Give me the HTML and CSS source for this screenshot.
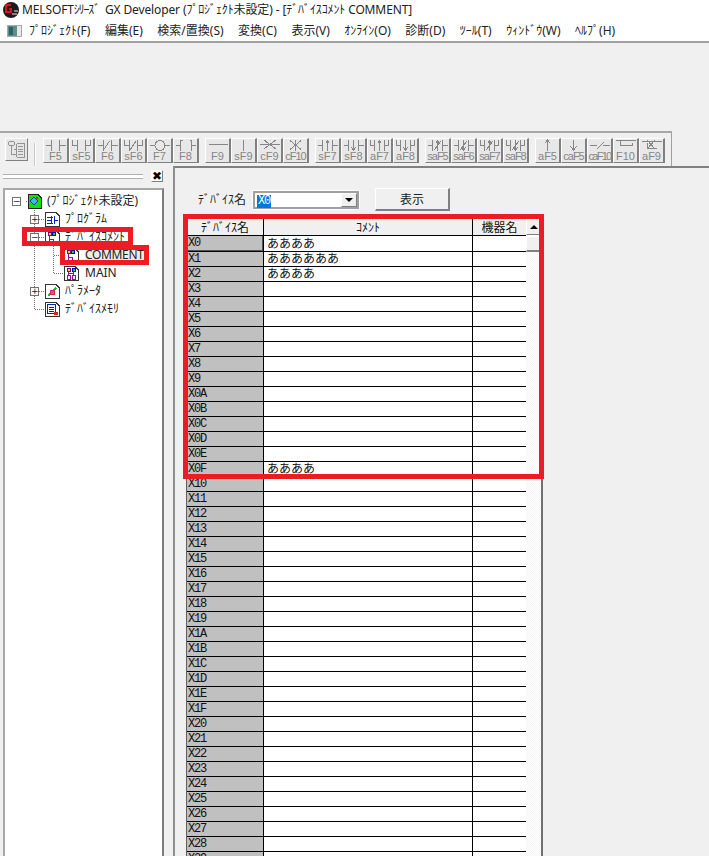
FILE: index.html
```html
<!DOCTYPE html>
<html lang="ja">
<head>
<meta charset="utf-8">
<title>GX Developer</title>
<link rel="stylesheet" href="styles.css">
</head>
<body>
<svg class="defs" width="0" height="0">
  <defs>
    <symbol id="l-no" viewBox="0 0 24 12"><path d="M2 6.5H7.5M7.5 1V12M15.5 1V12M15.5 6.5H22"/></symbol>
    <symbol id="l-nop" viewBox="0 0 24 12"><path d="M2.5 1V6.5H7.5M7.5 1V12M15.5 1V12M15.5 6.5H20.5V1"/></symbol>
    <symbol id="l-nc" viewBox="0 0 24 12"><path d="M2 6.5H7.5M7.5 1V12M15.5 1V12M15.5 6.5H22M7.5 11L13.5 2"/></symbol>
    <symbol id="l-ncp" viewBox="0 0 24 12"><path d="M2.5 1V6.5H7.5M7.5 1V12M15.5 1V12M15.5 6.5H20.5V1M8 11L14 2"/></symbol>
    <symbol id="l-coil" viewBox="0 0 24 12"><circle cx="12" cy="6.5" r="5"/><path d="M2 6.5H7M17 6.5H22"/></symbol>
    <symbol id="l-app" viewBox="0 0 24 12"><path d="M2 6.5H5.5M8.5 1H6.5V12H8.5M15.5 1H17.5V12H15.5M18 6.5H22"/></symbol>
    <symbol id="l-h" viewBox="0 0 24 12"><path d="M3 5.5H22"/></symbol>
    <symbol id="l-v" viewBox="0 0 24 12"><path d="M11.5 1V12"/></symbol>
    <symbol id="l-xh" viewBox="0 0 24 12"><path d="M2 5.5H22M6 1L18 10M18 1L6 10"/></symbol>
    <symbol id="l-xv" viewBox="0 0 24 12"><path d="M11.5 1V12M6 1.5L17 10.5M17 1.5L6 10.5"/></symbol>
    <symbol id="l-up" viewBox="0 0 24 12"><path d="M2 6.5H6.5M6.5 1V12M16.5 1V12M16.5 6.5H22M11.5 2V12M9.5 4.5L11.5 2L13.5 4.5"/></symbol>
    <symbol id="l-dn" viewBox="0 0 24 12"><path d="M2 6.5H6.5M6.5 1V12M16.5 1V12M16.5 6.5H22M11.5 1V11M9.5 8.5L11.5 11L13.5 8.5"/></symbol>
    <symbol id="l-upp" viewBox="0 0 24 12"><path d="M2.5 1V6.5H6.5M6.5 1V12M16.5 1V12M16.5 6.5H20.5V1M11.5 2V12M9.5 4.5L11.5 2L13.5 4.5"/></symbol>
    <symbol id="l-dnp" viewBox="0 0 24 12"><path d="M2.5 1V6.5H6.5M6.5 1V12M16.5 1V12M16.5 6.5H20.5V1M11.5 1V11M9.5 8.5L11.5 11L13.5 8.5"/></symbol>
    <symbol id="l-upn" viewBox="0 0 24 12"><path d="M2 6.5H6.5M6.5 1V12M16.5 1V12M16.5 6.5H22M11.5 2V12M9.5 4.5L11.5 2L13.5 4.5M8 11L15 2"/></symbol>
    <symbol id="l-dnn" viewBox="0 0 24 12"><path d="M2 6.5H6.5M6.5 1V12M16.5 1V12M16.5 6.5H22M11.5 1V11M9.5 8.5L11.5 11L13.5 8.5M8 11L15 2"/></symbol>
    <symbol id="l-upnp" viewBox="0 0 24 12"><path d="M2.5 1V6.5H6.5M6.5 1V12M16.5 1V12M16.5 6.5H20.5V1M11.5 2V12M9.5 4.5L11.5 2L13.5 4.5M8 11L15 2"/></symbol>
    <symbol id="l-dnnp" viewBox="0 0 24 12"><path d="M2.5 1V6.5H6.5M6.5 1V12M16.5 1V12M16.5 6.5H20.5V1M11.5 1V11M9.5 8.5L11.5 11L13.5 8.5M8 11L15 2"/></symbol>
    <symbol id="l-aup" viewBox="0 0 24 12"><path d="M11.5 1V12M8.5 4.5L11.5 1L14.5 4.5"/></symbol>
    <symbol id="l-adn" viewBox="0 0 24 12"><path d="M11.5 1V11M8.5 7.5L11.5 11L14.5 7.5"/></symbol>
    <symbol id="l-diag" viewBox="0 0 24 12"><path d="M2 6.5H9M15 6.5H22M9 10L16 3"/></symbol>
    <symbol id="l-f10" viewBox="0 0 24 12"><path d="M2 1.5H22M6.5 1.5V6.5H18M18 6.5V4"/></symbol>
    <symbol id="l-af9" viewBox="0 0 24 12"><path d="M2 2.5H22M7 9.5H17M7 1L15 10M15 1L7 10M7 9.5V4"/></symbol>
  </defs>
</svg>

<header class="titlebar">
  <svg class="logo" viewBox="0 0 16 16"><circle cx="8" cy="8" r="8" fill="#1c1c1c"/><path d="M8 3H3V10H8V7H6" fill="none" stroke="#e01020" stroke-width="2"/><path d="M9 12H14M11 9H15" stroke="#e8e8e8"/></svg>
  <span class="title-text">MELSOFT<span class="kana-tight">ｼﾘｰｽﾞ</span>&nbsp; GX Developer (ﾌﾟﾛｼﾞｪｸﾄ未設定) - [ﾃﾞﾊﾞｲｽｺﾒﾝﾄ COMMENT]</span>
</header>

<nav class="menubar">
  <svg class="menu-icon" viewBox="0 0 15 12"><rect width="15" height="12" fill="#a8a8a8"/><rect x="1" y="1" width="13" height="10" fill="#e8e8e8"/><rect x="1" y="1" width="9" height="10" fill="#5d8f86"/><rect x="2" y="2" width="4" height="8" fill="#2f5f6a"/></svg>
  <ul class="menu-list">
    <li>ﾌﾟﾛｼﾞｪｸﾄ(F)</li><li>編集(E)</li><li>検索/置換(S)</li><li>変換(C)</li><li>表示(V)</li><li>ｵﾝﾗｲﾝ(O)</li><li>診断(D)</li><li>ﾂｰﾙ(T)</li><li>ｳｨﾝﾄﾞｳ(W)</li><li>ﾍﾙﾌﾟ(H)</li>
  </ul>
</nav>

<div class="blank"></div>

<div class="toolbar">
  <div class="tb-first">
    <button class="tb-big"><svg viewBox="0 0 21 20" class="tb-big-icon"><path d="M2 1.5H8V5.5H2ZM4.5 5.5V15.5H10M8 9.5H10M10.5 3.5H19.5V18.5H10.5ZM12 6.5H18M12 9.5H18M12 12.5H18M12 15.5H18"/></svg></button>
  </div>
  <div class="tb-sep"></div>
  <div class="tb-group">
    <button class="tb"><svg><use href="#l-no"/></svg><span>F5</span></button>
    <button class="tb"><svg><use href="#l-nop"/></svg><span>sF5</span></button>
    <button class="tb"><svg><use href="#l-nc"/></svg><span>F6</span></button>
    <button class="tb"><svg><use href="#l-ncp"/></svg><span>sF6</span></button>
    <button class="tb"><svg><use href="#l-coil"/></svg><span>F7</span></button>
    <button class="tb"><svg><use href="#l-app"/></svg><span>F8</span></button>
  </div>
  <div class="tb-group">
    <button class="tb"><svg><use href="#l-h"/></svg><span>F9</span></button>
    <button class="tb"><svg><use href="#l-v"/></svg><span>sF9</span></button>
    <button class="tb"><svg><use href="#l-xh"/></svg><span>cF9</span></button>
    <button class="tb"><svg><use href="#l-xv"/></svg><span class="tight">cF10</span></button>
  </div>
  <div class="tb-group">
    <button class="tb"><svg><use href="#l-up"/></svg><span>sF7</span></button>
    <button class="tb"><svg><use href="#l-dn"/></svg><span>sF8</span></button>
    <button class="tb"><svg><use href="#l-upp"/></svg><span>aF7</span></button>
    <button class="tb"><svg><use href="#l-dnp"/></svg><span>aF8</span></button>
  </div>
  <div class="tb-group">
    <button class="tb"><svg><use href="#l-upn"/></svg><span class="tight">saF5</span></button>
    <button class="tb"><svg><use href="#l-dnn"/></svg><span class="tight">saF6</span></button>
    <button class="tb"><svg><use href="#l-upnp"/></svg><span class="tight">saF7</span></button>
    <button class="tb"><svg><use href="#l-dnnp"/></svg><span class="tight">saF8</span></button>
  </div>
  <div class="tb-group">
    <button class="tb"><svg><use href="#l-aup"/></svg><span>aF5</span></button>
    <button class="tb"><svg><use href="#l-adn"/></svg><span class="tight">caF5</span></button>
    <button class="tb"><svg><use href="#l-diag"/></svg><span class="tighter">caF10</span></button>
    <button class="tb"><svg><use href="#l-f10"/></svg><span>F10</span></button>
    <button class="tb"><svg><use href="#l-af9"/></svg><span>aF9</span></button>
  </div>
</div>

<main class="workspace">
  <aside class="leftpane">
    <div class="pane-head">
      <div class="grip"></div>
      <button class="close">✖</button>
    </div>
    <div class="tree">
      <svg class="tree-lines" width="80" height="130"><path d="M20.5 11H27M29.5 20V119M29.5 29H40M29.5 47H40M29.5 101H40M29.5 119H40M48.5 56V83M48.5 65H59M48.5 83H59"/></svg>
      <div class="node lv0"><span class="exp">−</span>
        <svg class="ticon" viewBox="0 0 15 15"><path d="M1 .5H11L14.500 4V14.500H1Z" fill="#10e010" stroke="#222"/><path d="M7 3L11 7L7 11L3 7Z" fill="#30c0e0" stroke="#0030d0"/><circle cx="10" cy="4" r="1.500" fill="#e02020"/></svg>
        <span class="lbl">(ﾌﾟﾛｼﾞｪｸﾄ未設定)</span></div>
      <div class="node lv1"><span class="exp">+</span>
        <svg class="ticon" viewBox="0 0 15 15"><path d="M.5 .5H11L14.500 4V14.500H.5Z" fill="#fff" stroke="#333"/><path d="M2 5H6M2 8H6M2 11H6M6 4V12M9 4V12M9 8H13M7 5H8M7 11H8" stroke="#0020e0" fill="none"/></svg>
        <span class="lbl">ﾌﾟﾛｸﾞﾗﾑ</span></div>
      <div class="node lv1"><span class="exp">−</span>
        <svg class="ticon" viewBox="0 0 15 15"><path d="M.5 .5H11L14.500 4V14.500H.5Z" fill="#fff" stroke="#333"/><rect x="3" y="2" width="3" height="3" fill="#e0e000" stroke="#800080"/><rect x="7" y="2" width="3" height="3" fill="#20d020" stroke="#0000c0"/><path d="M4.500 5V13M4.500 9H8V12" stroke="#a000a0" fill="none"/></svg>
        <span class="lbl">ﾃﾞﾊﾞｲｽｺﾒﾝﾄ</span></div>
      <div class="node lv2">
        <svg class="ticon" viewBox="0 0 15 15"><path d="M.5 .5H11L14.500 4V14.500H.5Z" fill="#fff" stroke="#333"/><rect x="3" y="2" width="3" height="3" fill="#e0e000" stroke="#800080"/><rect x="7" y="2" width="3" height="3" fill="#20d020" stroke="#0000c0"/><path d="M4.500 5V13M4.500 9H8V12" stroke="#a000a0" fill="none"/></svg>
        <span class="lbl selected">COMMENT</span></div>
      <div class="node lv2">
        <svg class="ticon" viewBox="0 0 15 15"><path d="M.5 .5H11L14.500 4V14.500H.5Z" fill="#fff" stroke="#333"/><rect x="3" y="2" width="3" height="3" fill="#e0e000" stroke="#800080"/><rect x="8" y="2" width="3" height="3" fill="#20d020" stroke="#0000c0"/><rect x="3" y="9" width="3" height="4" fill="#fff" stroke="#a000a0"/><rect x="8" y="9" width="3" height="4" fill="#fff" stroke="#a000a0"/><path d="M4.500 5V9M9.500 5V9M4.500 7H9.500" stroke="#a000a0"/></svg>
        <span class="lbl main-lbl">MAIN</span></div>
      <div class="node lv1"><span class="exp">+</span>
        <svg class="ticon" viewBox="0 0 15 15"><path d="M.5 .5H11L14.500 4V14.500H.5Z" fill="#fff" stroke="#333"/><path d="M3 12L11 4" stroke="#10c020" stroke-width="2"/><rect x="5" y="6" width="4" height="4" fill="#a08030" stroke="#e02060"/></svg>
        <span class="lbl">ﾊﾟﾗﾒｰﾀ</span></div>
      <div class="node lv1b">
        <svg class="ticon" viewBox="0 0 15 15"><path d="M.5 .5H11L14.500 4V14.500H.5Z" fill="#fff" stroke="#333"/><path d="M2.500 2.500H10.500V11.500H2.500Z" fill="#fff" stroke="#0020d0"/><path d="M4 5H9M4 7H9M4 9H9" stroke="#222"/><rect x="9" y="10" width="4" height="3" fill="#e02020"/></svg>
        <span class="lbl">ﾃﾞﾊﾞｲｽﾒﾓﾘ</span></div>
    </div>
  </aside>

  <section class="rightpane">
    <div class="form-row">
      <label class="form-label">ﾃﾞﾊﾞｲｽ名</label>
      <div class="combo"><span class="combo-text"><span class="combo-sel">X0</span></span><span class="combo-btn"><i class="arrow-down"></i></span></div>
      <button class="show-btn">表示</button>
    </div>
    <div class="grid">
      <table class="sheet">
        <colgroup><col class="c1"><col class="c2"><col class="c3"></colgroup>
        <thead><tr><th>ﾃﾞﾊﾞｲｽ名</th><th>ｺﾒﾝﾄ</th><th>機器名</th></tr></thead>
        <tbody>
          <tr class="first"><td class="focus">X0</td><td>ああああ</td><td></td></tr>
          <tr><td>X1</td><td>ああああああ</td><td></td></tr>
          <tr><td>X2</td><td>ああああ</td><td></td></tr>
          <tr><td>X3</td><td></td><td></td></tr>
          <tr><td>X4</td><td></td><td></td></tr>
          <tr><td>X5</td><td></td><td></td></tr>
          <tr><td>X6</td><td></td><td></td></tr>
          <tr><td>X7</td><td></td><td></td></tr>
          <tr><td>X8</td><td></td><td></td></tr>
          <tr><td>X9</td><td></td><td></td></tr>
          <tr><td>X0A</td><td></td><td></td></tr>
          <tr><td>X0B</td><td></td><td></td></tr>
          <tr><td>X0C</td><td></td><td></td></tr>
          <tr><td>X0D</td><td></td><td></td></tr>
          <tr><td>X0E</td><td></td><td></td></tr>
          <tr><td>X0F</td><td>ああああ</td><td></td></tr>
          <tr><td>X10</td><td></td><td></td></tr>
          <tr><td>X11</td><td></td><td></td></tr>
          <tr><td>X12</td><td></td><td></td></tr>
          <tr><td>X13</td><td></td><td></td></tr>
          <tr><td>X14</td><td></td><td></td></tr>
          <tr><td>X15</td><td></td><td></td></tr>
          <tr><td>X16</td><td></td><td></td></tr>
          <tr><td>X17</td><td></td><td></td></tr>
          <tr><td>X18</td><td></td><td></td></tr>
          <tr><td>X19</td><td></td><td></td></tr>
          <tr><td>X1A</td><td></td><td></td></tr>
          <tr><td>X1B</td><td></td><td></td></tr>
          <tr><td>X1C</td><td></td><td></td></tr>
          <tr><td>X1D</td><td></td><td></td></tr>
          <tr><td>X1E</td><td></td><td></td></tr>
          <tr><td>X1F</td><td></td><td></td></tr>
          <tr><td>X20</td><td></td><td></td></tr>
          <tr><td>X21</td><td></td><td></td></tr>
          <tr><td>X22</td><td></td><td></td></tr>
          <tr><td>X23</td><td></td><td></td></tr>
          <tr><td>X24</td><td></td><td></td></tr>
          <tr><td>X25</td><td></td><td></td></tr>
          <tr><td>X26</td><td></td><td></td></tr>
          <tr><td>X27</td><td></td><td></td></tr>
          <tr><td>X28</td><td></td><td></td></tr>
          <tr><td>X29</td><td></td><td></td></tr>
        </tbody>
      </table>
      <div class="vscroll">
        <div class="sb-up"><i class="arrow-up"></i></div>
        <div class="sb-thumb"></div>
      </div>
    </div>
  </section>
</main>

<div class="mark mark-tree1"></div>
<div class="mark mark-tree2"></div>
<div class="mark mark-grid"></div>
</body>
</html>
```

FILE: styles.css
```css
* { box-sizing: border-box; }
html, body { margin: 0; padding: 0; }
body {
  position: relative;
  width: 709px;
  height: 856px;
  overflow: hidden;
  background: #f0f0f0;
  color: #000;
  font: 12px/1 "Noto Sans", "Noto Sans CJK JP", sans-serif;
}
.defs { position: absolute; }

.titlebar {
  display: flex;
  align-items: center;
  height: 20px;
  padding-left: 3px;
  gap: 3px;
  background: #fff;
  white-space: nowrap;
  color: #222;
}
.logo { width: 16px; height: 16px; }
.title-text { letter-spacing: -.13px; }
.kana-tight { letter-spacing: -1.2px; }

.menubar {
  display: flex;
  align-items: center;
  height: 23px;
  padding-left: 7px;
  background: #fff;
  border-bottom: 2px solid #a0a0a0;
  color: #222;
}
.menu-icon { width: 15px; height: 12px; }
.menu-list {
  display: flex;
  gap: 14.5px;
  margin: 0 0 0 7px;
  padding: 0;
  list-style: none;
  white-space: nowrap;
}

.blank { height: 88px; }

.toolbar {
  display: flex;
  width: 672px;
  height: 35px;
  padding: 5px 0 0 5px;
  border-top: 2px solid #a8a8a8;
  border-right: 1px solid #a0a0a0;
}
.tb-first { width: 23px; }
.tb-big {
  width: 23px;
  height: 23px;
  padding: 1px;
  border: 1px solid;
  border-color: #fff #808080 #808080 #fff;
  background: #e6e6e6;
}
.tb-big-icon { display: block; width: 19px; height: 19px; fill: none; stroke: #8a8a8a; shape-rendering: crispEdges; }
.tb-sep {
  width: 2px;
  height: 23px;
  margin: 5px 7px 0 6px;
  border-left: 1px solid #c8c8c8;
  border-right: 1px solid #fff;
}
.tb-group { display: flex; margin-right: 6px; }
.tb {
  display: flex;
  flex-direction: column;
  align-items: center;
  width: 26px;
  height: 25px;
  padding: 0;
  border: 1px solid;
  border-color: #fff #808080 #808080 #fff;
  border-right-width: 2px;
  background: #e8e8e8;
  font: 11px/11px "Liberation Sans", sans-serif;
  color: #858585;
  overflow: hidden;
}
.tb svg {
  width: 24px;
  height: 12px;
  flex: none;
  fill: none;
  stroke: #868686;
  stroke-width: 1;
  shape-rendering: crispEdges;
}
.tb span { white-space: nowrap; }
.tb span.tight { letter-spacing: -1px; }
.tb span.tighter { letter-spacing: -1.7px; }

.workspace { display: flex; height: 690px; overflow: hidden; }

.leftpane { width: 173px; flex: none; padding-left: 3px; }
.pane-head {
  display: flex;
  align-items: flex-start;
  height: 22px;
  padding-top: 4px;
}
.grip {
  width: 140px;
  height: 5px;
  margin-top: 4px;
  border-top: 1px solid #b0b0b0;
  border-bottom: 1px solid #b0b0b0;
  background: #fff;
}
.close {
  width: 12px;
  height: 12px;
  margin-left: 8px;
  padding: 0;
  border: 1px solid;
  border-color: #fff #808080 #808080 #fff;
  background: #fff;
  font: 12px/10px "DejaVu Sans", sans-serif;
  color: #000;
}
.tree {
  position: relative;
  width: 161px;
  height: 680px;
  padding-top: 2px;
  border: 2px solid #a8a8a8;
  border-right-color: #7c7c7c;
  border-bottom: 0;
  background: #fff;
}
.tree-lines {
  position: absolute;
  left: 0;
  top: 0;
  fill: none;
  stroke: #707070;
  stroke-dasharray: 1 1;
  shape-rendering: crispEdges;
}
.node {
  position: relative;
  display: flex;
  align-items: center;
  height: 18px;
  white-space: nowrap;
  color: #222;
}
.lv0 { padding-left: 7px; }
.lv1 { padding-left: 25px; }
.lv1b { padding-left: 40px; }
.lv2 { padding-left: 59px; }
.exp {
  width: 9px;
  height: 9px;
  margin-right: 6px;
  border: 1px solid #707070;
  background: #fff;
  font: 9px/7px "DejaVu Sans", sans-serif;
  text-align: center;
}
.ticon { width: 15px; height: 15px; flex: none; shape-rendering: crispEdges; }
.lbl { margin-left: 5px; }
.selected { margin-left: 6px; background: #ececec; letter-spacing: -.35px; }
.main-lbl { margin-left: 6px; }

.rightpane {
  width: 536px;
  flex: none;
  padding: 20px 0 0 11px;
  border-top: 2px solid #808080;
  border-left: 2px solid #909090;
}
.form-row {
  display: flex;
  align-items: center;
  height: 23px;
  padding-left: 12px;
}
.form-label { width: 55px; white-space: nowrap; color: #222; }
.combo {
  display: flex;
  width: 106px;
  height: 18px;
  margin-top: 1px;
  border: 2px solid #a0a0a0;
  outline: 1px solid #fff;
  background: #fff;
}
.combo-text { flex: 1; padding: 1px 0 0 2px; }
.combo-sel {
  display: inline-block;
  padding: 0 1px;
  height: 13px;
  background: #0078d7;
  color: #fff;
  font: 12px/13px "Liberation Mono", monospace;
  letter-spacing: -1.2px;
}
.combo-btn {
  display: flex;
  align-items: center;
  justify-content: center;
  width: 16px;
  border: 1px solid;
  border-color: #fff #808080 #808080 #fff;
  background: #f0f0f0;
}
.arrow-down, .arrow-up { display: block; width: 0; height: 0; border-left: 4px solid transparent; border-right: 4px solid transparent; }
.arrow-down { border-top: 4px solid #000; }
.arrow-up { border-bottom: 4px solid #000; }
.show-btn {
  width: 75px;
  height: 23px;
  margin-left: 16px;
  padding: 0;
  border: 1px solid;
  border-color: #fff #808080 #808080 #fff;
  border-right-width: 2px;
  border-bottom-width: 2px;
  background: #f0f0f0;
  font: 12px/1 "Noto Sans CJK JP", sans-serif;
  color: #222;
}

.grid {
  display: flex;
  width: 357px;
  margin-top: 8px;
  border-left: 1px solid #606060;
  border-right: 2px solid #707070;
}
.sheet {
  width: 339px;
  flex: none;
  table-layout: fixed;
  border-collapse: separate;
  border-spacing: 0;
  background: #fff;
}
.c1 { width: 77px; }
.c2 { width: 209px; }
.c3 { width: 53px; }
.sheet th {
  height: 17px;
  padding: 0;
  border-right: 1px solid #000;
  border-bottom: 1px solid #000;
  background: #f0f0f0;
  font: 400 12px/15px "Noto Sans", "Noto Sans CJK JP", sans-serif;
  color: #111;
  white-space: nowrap;
}
.sheet td {
  height: 15px;
  padding: 0;
  border-right: 1px solid #000;
  border-bottom: 1px solid #000;
  font: 12px/12px "Noto Sans CJK JP", sans-serif;
  color: #111;
  white-space: nowrap;
}
.sheet th:last-child, .sheet td:last-child { border-right: 0; }
.sheet td:first-child {
  padding-left: 1px;
  background: #c0c0c0;
  font: 12px/13px "Liberation Mono", monospace;
  letter-spacing: -1.2px;
}
.sheet td:nth-child(2) { padding: 0 0 2px 3px; }
.first td { height: 16px; }
.sheet td.focus { box-shadow: inset -1px -1px 0 #555; }

.vscroll {
  width: 15px;
  flex: none;
  background: repeating-conic-gradient(#f4f4f4 0 25%, #fff 0 50%) 0 0 / 2px 2px;
}
.sb-up {
  display: flex;
  align-items: center;
  justify-content: center;
  height: 16px;
  border: 1px solid;
  border-color: #fff #808080 #808080 #fff;
  background: #f0f0f0;
}
.sb-thumb {
  height: 16px;
  margin-top: 1px;
  border: 1px solid;
  border-color: #fff #808080 #808080 #fff;
  border-bottom-width: 2px;
  background: #f0f0f0;
}

.mark {
  position: absolute;
  border: 5px solid #ed1c24;
  pointer-events: none;
}
.mark-tree1 { left: 22px; top: 227px; width: 111px; height: 19px; }
.mark-tree2 { left: 60px; top: 245px; width: 89px; height: 20px; }
.mark-grid { left: 183px; top: 214px; width: 361px; height: 265px; }
```
